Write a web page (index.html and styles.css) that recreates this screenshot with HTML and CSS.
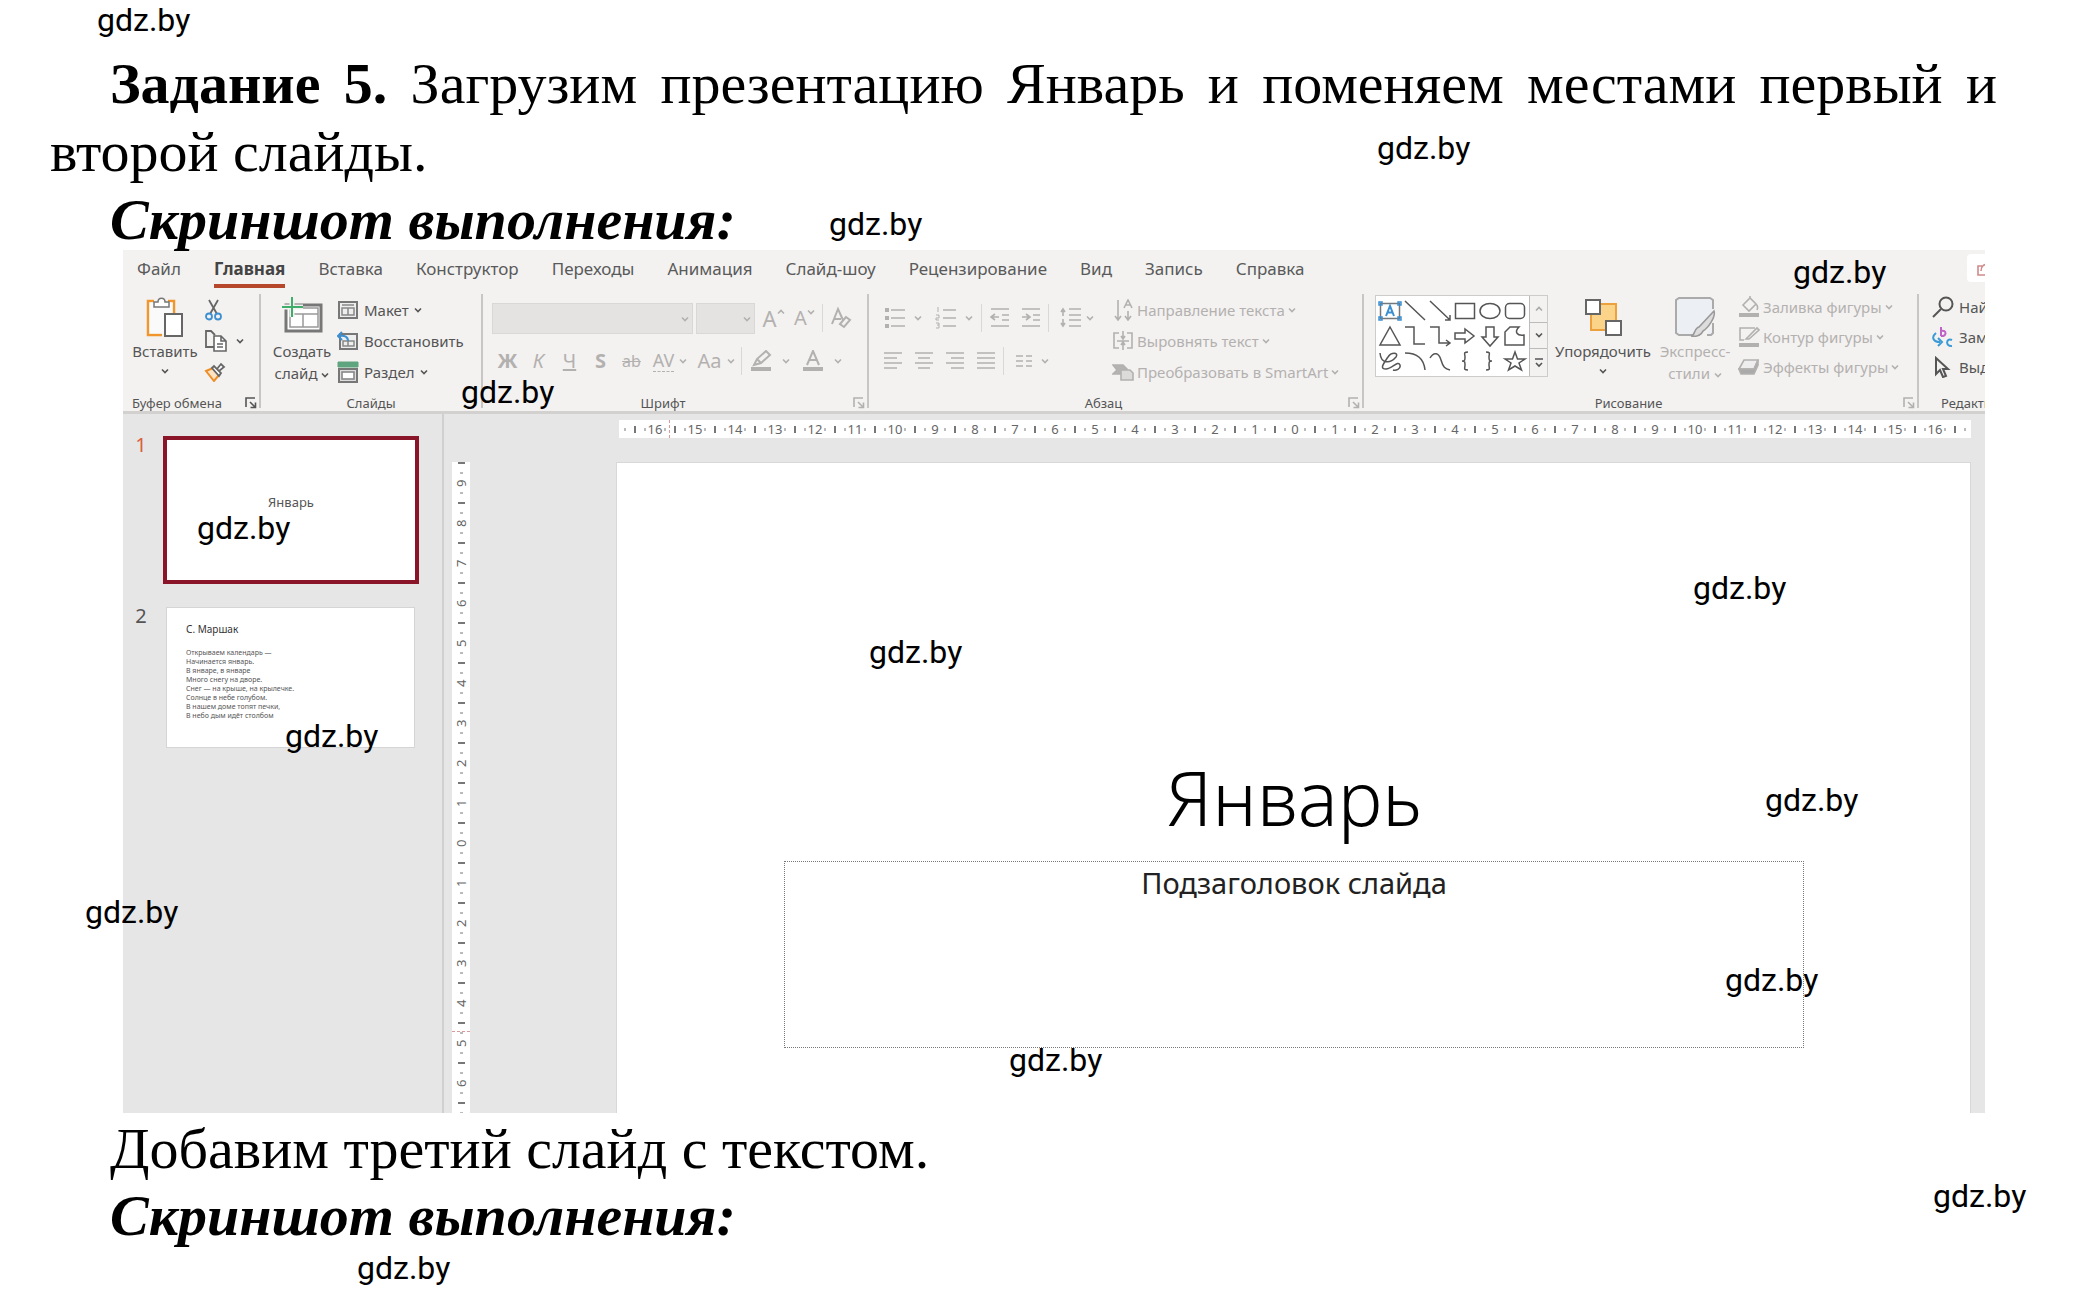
FILE: index.html
```html
<!DOCTYPE html>
<html lang="ru">
<head>
<meta charset="utf-8">
<title>Задание 5</title>
<link rel="stylesheet" href="styles.css">
</head>
<body>
<svg class="defs" aria-hidden="true">
  <symbol id="chev" viewBox="0 0 8 6"><path d="M1 1.5l3 3 3-3"/></symbol>
  <symbol id="chev-up" viewBox="0 0 8 6"><path d="M1 4.5l3-3 3 3"/></symbol>
  <symbol id="launch" viewBox="0 0 12 12"><path d="M1 10V1h9M5 5l5 5M10.500 5.500V10.500H5.500"/></symbol>
</svg>
<main class="page">
  <p class="task"><b>Задание 5.</b> Загрузим презентацию Январь и поменяем местами первый и второй слайды.</p>
  <p class="caption">Скриншот выполнения:</p>

  <section class="app">
    <header class="ribbon">
      <nav class="tabs">
        <a href="#">Файл</a>
        <a href="#" class="active">Главная</a>
        <a href="#">Вставка</a>
        <a href="#">Конструктор</a>
        <a href="#">Переходы</a>
        <a href="#">Анимация</a>
        <a href="#">Слайд-шоу</a>
        <a href="#">Рецензирование</a>
        <a href="#">Вид</a>
        <a href="#">Запись</a>
        <a href="#">Справка</a>
        <button class="share" aria-label="Поделиться"><svg width="16" height="16" viewBox="0 0 16 16"><path d="M5 6H1v9h13v-4M4 11c0-5 3-7 8-7M9 1l4 3-4 3"/></svg></button>
      </nav>
      <div class="groups">
        <section class="group g-clip">
          <div class="body">
            <button class="big">
              <svg width="40" height="42" viewBox="0 0 40 42"><path d="M9 5H3v34h14M23 5h6v12" stroke="#f0962d" stroke-width="2.500" fill="none"/><rect x="4.500" y="6.500" width="23" height="31" fill="#fafafa" stroke="none"/><path d="M9 11V6h4c0-5 7-5 7 0h4v5z" fill="#fff" stroke="#777" stroke-width="1.500"/><rect x="20" y="18" width="17" height="22" fill="#fff" stroke="#666" stroke-width="2"/></svg>
              <span>Вставить</span>
              <svg class="chev"><use href="#chev"/></svg>
            </button>
            <div class="stack">
              <button class="tool" aria-label="Вырезать"><svg width="20" height="22" viewBox="0 0 20 22"><path d="M5 1l8 14M14 1L6 15" stroke="#666" stroke-width="1.800" fill="none"/><circle cx="5" cy="17.500" r="3" fill="none" stroke="#3c8fd0" stroke-width="1.800"/><circle cx="14" cy="17.500" r="3" fill="none" stroke="#3c8fd0" stroke-width="1.800"/></svg></button>
              <button class="tool" aria-label="Копировать"><svg width="24" height="22" viewBox="0 0 24 22"><path d="M10 17H2V1h5l4 4" fill="none" stroke="#666" stroke-width="1.800"/><path d="M10 6h7l5 5v10H10zM17 6v5h5M13 14h6M13 17h6" fill="#fff" stroke="#666" stroke-width="1.600"/></svg><svg class="chev"><use href="#chev"/></svg></button>
              <button class="tool" aria-label="Формат по образцу"><svg width="22" height="20" viewBox="0 0 22 20"><path d="M2 9l7-3 6 7-5 6z" fill="#fde3c2" stroke="#ee8e28" stroke-width="2"/><path d="M8 6l2-2 7 7-2 3zM13 7l4-5 3 3-5 4" fill="#fff" stroke="#666" stroke-width="1.800"/></svg></button>
            </div>
          </div>
          <footer><h2>Буфер обмена</h2><button class="launch" aria-label="Буфер обмена: параметры"><svg><use href="#launch"/></svg></button></footer>
        </section>

        <section class="group g-slides">
          <div class="body">
            <button class="big">
              <svg width="42" height="42" viewBox="0 0 42 42"><rect x="5" y="9" width="35" height="26" fill="#fff" stroke="#777" stroke-width="3"/><path d="M9 12h28v19H9zM9 18h28M22 18v13" fill="none" stroke="#999" stroke-width="1.500"/><path d="M11 1v20M1 11h21" stroke="#f3f2f1" stroke-width="5"/><path d="M11 1v20M1 11h21" stroke="#3fae6a" stroke-width="2"/></svg>
              <span>Создать</span>
              <span>слайд <svg class="chev"><use href="#chev"/></svg></span>
            </button>
            <div class="stack">
              <button class="item"><svg width="22" height="20" viewBox="0 0 22 20"><rect x="2" y="2" width="18" height="16" fill="#eee" stroke="#777" stroke-width="2"/><path d="M5 5h12M5 8h12v7H5zM11 8v7" fill="none" stroke="#888" stroke-width="1.500"/></svg>Макет <svg class="chev"><use href="#chev"/></svg></button>
              <button class="item"><svg width="22" height="20" viewBox="0 0 22 20"><rect x="3" y="3" width="17" height="15" fill="#eee" stroke="#777" stroke-width="2"/><path d="M6 10h11v5H6zM11 10v5" fill="none" stroke="#888" stroke-width="1.500"/><path d="M2 5c6-1 9 1 9 5M5 1L1 5l4 4" fill="none" stroke="#3c8fd0" stroke-width="2"/></svg>Восстановить</button>
              <button class="item"><svg width="22" height="22" viewBox="0 0 22 22"><path d="M1 1h20v5H1z" fill="#5fa57f" stroke="#5fa57f" stroke-width="1"/><rect x="2" y="8" width="18" height="13" fill="#ddd" stroke="#777" stroke-width="2"/><rect x="5" y="11" width="12" height="7" fill="#fff" stroke="#888"/></svg>Раздел <svg class="chev"><use href="#chev"/></svg></button>
            </div>
          </div>
          <footer><h2>Слайды</h2></footer>
        </section>

        <section class="group g-font off">
          <div class="body rows">
            <div class="row first">
              <label class="combo font-name"><select aria-label="Шрифт" disabled></select><svg class="chev"><use href="#chev"/></svg></label>
              <label class="combo font-size"><select aria-label="Размер" disabled></select><svg class="chev"><use href="#chev"/></svg></label>
              <button class="glyph big-a" aria-label="Увеличить">A<svg class="chev up"><use href="#chev-up"/></svg></button>
              <button class="glyph" aria-label="Уменьшить">A<svg class="chev up"><use href="#chev"/></svg></button>
              <i class="bar"></i>
              <button class="glyph" aria-label="Очистить формат"><svg width="22" height="24" viewBox="0 0 22 24"><path d="M2 18L8 3l5 11M4 13h7M10 18l6-7 4 3-6 7z" stroke-width="2"/></svg></button>
            </div>
            <div class="row">
              <button class="glyph"><b>Ж</b></button>
              <button class="glyph"><em>К</em></button>
              <button class="glyph"><u>Ч</u></button>
              <button class="glyph shadow"><b>S</b></button>
              <button class="glyph small"><s>ab</s></button>
              <button class="glyph pair av"><span>AV</span><svg class="chev"><use href="#chev"/></svg></button>
              <button class="glyph pair">Aa<svg class="chev"><use href="#chev"/></svg></button>
              <i class="bar"></i>
              <button class="glyph pair wide" aria-label="Цвет выделения"><svg width="22" height="22" viewBox="0 0 22 22"><path d="M4 15l3-6 9-8 4 4-9 8zM7 9l4 4" stroke-width="2"/><path d="M1 19h20" stroke-width="4"/></svg><svg class="chev"><use href="#chev"/></svg></button>
              <button class="glyph pair wide" aria-label="Цвет текста"><svg width="22" height="22" viewBox="0 0 22 22"><path d="M5 15l6-14 6 14M7 10h8" stroke-width="2"/><path d="M1 19h20" stroke-width="4"/></svg><svg class="chev"><use href="#chev"/></svg></button>
            </div>
          </div>
          <footer><h2>Шрифт</h2><button class="launch" aria-label="Шрифт: параметры"><svg><use href="#launch"/></svg></button></footer>
        </section>

        <section class="group g-para off">
          <div class="body">
            <div class="rows">
              <div class="row first">
                <button class="glyph pair" aria-label="Маркеры"><svg width="22" height="22" viewBox="0 0 22 22"><path d="M7 3h14M7 11h14M7 19h14"/><path d="M1 3h4M1 11h4M1 19h4" stroke-width="4"/></svg><svg class="chev"><use href="#chev"/></svg></button>
                <button class="glyph pair" aria-label="Нумерация"><svg width="22" height="22" viewBox="0 0 22 22"><path d="M8 3h13M8 11h13M8 19h13"/><path d="M3 0v5M1 8h3v3H1v2h3M1 16h3v5H1M2 18h2" stroke-width="1"/></svg><svg class="chev"><use href="#chev"/></svg></button>
                <i class="bar"></i>
                <button class="glyph" aria-label="Уменьшить отступ"><svg width="20" height="22" viewBox="0 0 20 22"><path d="M1 2h18M12 8h7M12 13h7M1 19h18M1 10h8M5 7l-4 3 4 3"/></svg></button>
                <button class="glyph" aria-label="Увеличить отступ"><svg width="20" height="22" viewBox="0 0 20 22"><path d="M1 2h18M12 8h7M12 13h7M1 19h18M1 10h8M5 7l4 3-4 3"/></svg></button>
                <i class="bar"></i>
                <button class="glyph pair spacing" aria-label="Интервал"><svg width="22" height="22" viewBox="0 0 22 22"><path d="M9 2h12M9 8h12M9 13h12M9 19h12M3 2v7M3 12v7M1 5l2-3 2 3M1 16l2 3 2-3"/></svg><svg class="chev"><use href="#chev"/></svg></button>
              </div>
              <div class="row">
                <button class="glyph" aria-label="По левому краю"><svg width="20" height="20" viewBox="0 0 20 20"><path d="M1 2h18M1 7h13M1 12h18M1 17h13"/></svg></button>
                <button class="glyph" aria-label="По центру"><svg width="20" height="20" viewBox="0 0 20 20"><path d="M1 2h18M4 7h12M1 12h18M4 17h12"/></svg></button>
                <button class="glyph" aria-label="По правому краю"><svg width="20" height="20" viewBox="0 0 20 20"><path d="M1 2h18M6 7h13M1 12h18M6 17h13"/></svg></button>
                <button class="glyph" aria-label="По ширине"><svg width="20" height="20" viewBox="0 0 20 20"><path d="M1 2h18M1 7h18M1 12h18M1 17h18"/></svg></button>
                <i class="bar"></i>
                <button class="glyph pair" aria-label="Колонки"><svg width="18" height="14" viewBox="0 0 18 14"><path d="M1 2h7M1 7h7M1 12h7M11 2h6M11 7h6M11 12h6"/></svg><svg class="chev"><use href="#chev"/></svg></button>
              </div>
            </div>
            <div class="stack">
              <button class="item"><svg width="22" height="22" viewBox="0 0 22 22"><path d="M6 1v19M3 17l3 4 3-4M16 12v8M13 17l3 4 3-4M12 9l4-8 4 8M13 6h5"/></svg>Направление текста <svg class="chev"><use href="#chev"/></svg></button>
              <button class="item"><svg width="22" height="20" viewBox="0 0 22 20"><path d="M7 2H2v15h5M15 2h5v15h-5M11 0v7M11 12v7M5 10h12M9 5l2 3 2-3M9 14l2-3 2 3"/></svg>Выровнять текст <svg class="chev"><use href="#chev"/></svg></button>
              <button class="item"><svg width="22" height="18" viewBox="0 0 22 18"><path d="M1 2h10l4 4-4 5H1l4-4z" fill="#b5b3b1"/><path d="M9 7h9l3 3v7H9z" fill="#dcdbda"/></svg>Преобразовать в SmartArt <svg class="chev"><use href="#chev"/></svg></button>
            </div>
          </div>
          <footer><h2>Абзац</h2><button class="launch" aria-label="Абзац: параметры"><svg><use href="#launch"/></svg></button></footer>
        </section>

        <section class="group g-draw">
          <div class="body">
            <div class="gallery">
              <svg class="shapes" width="153" height="78" viewBox="0 0 153 78">
                <rect x="4.500" y="7.500" width="19" height="15" stroke="#777"/><path d="M10 20l4-10 4 10M11.500 16.500h5" stroke="#3c8fd0" stroke-width="2"/>
                <path d="M3 6h3v3H3zM22 6h3v3h-3zM3 21h3v3H3zM22 21h3v3h-3z" stroke="#3c8fd0"/>
                <path d="M29 5l20 19M54 5l20 19M69 24h5v-5M79.500 7.500h19v15h-19z"/>
                <ellipse cx="114" cy="15" rx="10" ry="7.500"/><rect x="129.500" y="7.500" width="19" height="15" rx="4"/>
                <path d="M14 31l10 18H4zM29 31h9v17h11M54 31h9v16h10M70 44l4 3-4 3M79 37h10v-4l9 7-9 7v-4H79zM110 31h8v10h4l-8 9-8-9h4zM129 49V36l5-5h9c-5 5-2 9 5 8v10z"/>
                <path d="M4 57c1 11 10 11 16 4 3-5-5-5-8 0-4 6-9 12-2 12 6 0 12-9 14-4 1 4-4 6-7 5M29 57c13 0 19 7 20 17M54 62c4-7 9-5 11 2s4 9 9 10M92 56c-5 0-3 2-3 5s0 4-3 4c3 0 3 1 3 4s-2 5 3 5M110 56c5 0 3 2 3 5s0 4 3 4c-3 0-3 1-3 4s2 5-3 5M139 56l2.500 7h7.500l-6 4 2.500 7-6.500-4-6.500 4 2.500-7-6-4h7.500z"/>
              </svg>
              <div class="scroll">
                <button class="dim" aria-label="Вверх"><svg class="chev"><use href="#chev-up"/></svg></button>
                <button aria-label="Вниз"><svg class="chev"><use href="#chev"/></svg></button>
                <button aria-label="Ещё"><svg width="10" height="10" viewBox="0 0 10 10"><path d="M1 1h8M2 5l3 3 3-3"/></svg></button>
              </div>
            </div>
            <button class="big arrange">
              <svg width="40" height="42" viewBox="0 0 40 42"><rect x="8" y="8" width="25" height="26" fill="#fbd48a" stroke="#eda13c" stroke-width="2"/><rect x="3" y="4" width="14" height="14" fill="#fff" stroke="#666" stroke-width="2"/><rect x="23" y="25" width="15" height="14" fill="#fff" stroke="#666" stroke-width="2"/></svg>
              <span>Упорядочить</span>
              <svg class="chev"><use href="#chev"/></svg>
            </button>
            <button class="big styles off">
              <svg width="42" height="42" viewBox="0 0 42 42"><path d="M26 39H5l-3-2V4l3-2h31l3 2v9M39 27v10l-2 2h-4" fill="#eceff3" stroke="#aaa" stroke-width="2"/><path d="M17 40c4 0 3-8 8-9L40 15c2 6-6 17-11 20-2 5-8 6-12 5z" fill="#ddd" stroke="#999" stroke-width="1.500"/></svg>
              <span>Экспресс-</span>
              <span>стили <svg class="chev"><use href="#chev"/></svg></span>
            </button>
            <div class="stack off">
              <button class="item"><svg width="22" height="22" viewBox="0 0 22 22"><path d="M5 9l7-7 6 6-7 7zM12 2V0M18 8c2 2 2 4 1 6"/><path d="M1 19h20" stroke-width="4"/></svg>Заливка фигуры <svg class="chev"><use href="#chev"/></svg></button>
              <button class="item"><svg width="22" height="22" viewBox="0 0 22 22"><path d="M17 2H2v12h4M8 13L19 2l2 2L11 13z"/><path d="M1 19h20" stroke-width="4"/></svg>Контур фигуры <svg class="chev"><use href="#chev"/></svg></button>
              <button class="item"><svg width="22" height="18" viewBox="0 0 22 18"><path d="M1 11L6 2h14l-4 9z" fill="#eee"/><path d="M1 11h15l4-9v5l-4 9H3z" fill="#aaa"/></svg>Эффекты фигуры <svg class="chev"><use href="#chev"/></svg></button>
            </div>
          </div>
          <footer class="off-launch"><h2>Рисование</h2><button class="launch" aria-label="Рисование: параметры"><svg><use href="#launch"/></svg></button></footer>
        </section>

        <section class="group g-edit">
          <div class="body">
            <div class="stack">
              <button class="item"><svg width="22" height="22" viewBox="0 0 22 22"><path d="M1 21l8-8" stroke-width="2"/><circle cx="14" cy="8" r="6.500" stroke-width="2"/></svg>Найти</button>
              <button class="item"><svg width="22" height="22" viewBox="0 0 22 22"><path d="M9 1v9M9 5c6-2 6 6 0 5" stroke="#c063c6" stroke-width="2"/><path d="M4 7c-5 4-3 9 4 9M6 12l4 4-4 4M20 14c-6-3-7 7 0 6" stroke="#3c9bd6" stroke-width="2"/></svg>Заменить</button>
              <button class="item"><svg width="22" height="22" viewBox="0 0 22 22"><path d="M4 2v16l4-4 3 7 3-1-3-7h5z" stroke-width="2"/></svg>Выделить</button>
            </div>
          </div>
          <footer><h2>Редактирование</h2></footer>
        </section>
      </div>
    </header>

    <div class="workspace">
      <ol class="thumbs">
        <li><span class="num current">1</span><div class="thumb selected">Январь</div></li>
        <li><span class="num">2</span><div class="thumb poem">
          <h3>С. Маршак</h3>
          <p>Открываем календарь —</p><p>Начинается январь.</p><p>В январе, в январе</p><p>Много снегу на дворе.</p><p>Снег — на крыше, на крылечке.</p><p>Солнце в небе голубом.</p><p>В нашем доме топят печки,</p><p>В небо дым идёт столбом</p>
        </div></li>
      </ol>
      <div class="vruler"><span>9</span><span>8</span><span>7</span><span>6</span><span>5</span><span>4</span><span>3</span><span>2</span><span>1</span><span>0</span><span>1</span><span>2</span><span>3</span><span>4</span><span>5</span><span>6</span><i class="mark"></i></div>
      <div class="stage">
        <div class="hruler"><span>16</span><span>15</span><span>14</span><span>13</span><span>12</span><span>11</span><span>10</span><span>9</span><span>8</span><span>7</span><span>6</span><span>5</span><span>4</span><span>3</span><span>2</span><span>1</span><span>0</span><span>1</span><span>2</span><span>3</span><span>4</span><span>5</span><span>6</span><span>7</span><span>8</span><span>9</span><span>10</span><span>11</span><span>12</span><span>13</span><span>14</span><span>15</span><span>16</span><i class="mark"></i></div>
        <article class="slide">
          <h1>Январь</h1>
          <div class="subtitle">Подзаголовок слайда</div>
        </article>
      </div>
    </div>
  </section>

  <p class="after">Добавим третий слайд с текстом.</p>
  <p class="caption">Скриншот выполнения:</p>

  <span class="wm w1">gdz.by</span>
  <span class="wm w2">gdz.by</span>
  <span class="wm w3">gdz.by</span>
  <span class="wm w4">gdz.by</span>
  <span class="wm w5">gdz.by</span>
  <span class="wm w6">gdz.by</span>
  <span class="wm w7">gdz.by</span>
  <span class="wm w8">gdz.by</span>
  <span class="wm w9">gdz.by</span>
  <span class="wm w10">gdz.by</span>
  <span class="wm w11">gdz.by</span>
  <span class="wm w12">gdz.by</span>
  <span class="wm w13">gdz.by</span>
  <span class="wm w14">gdz.by</span>
  <span class="wm w15">gdz.by</span>
</main>
</body>
</html>
```
FILE: styles.css
```css
* { box-sizing: border-box; }
body { margin: 0; background: #fff; color: #000; }
h1, h2, h3, p, ol { margin: 0; padding: 0; font-weight: normal; }
button { border: 0; padding: 0; background: none; color: inherit; font: inherit; }
svg { flex: none; fill: none; stroke: currentColor; stroke-width: 1.6; }
.defs { position: absolute; width: 0; height: 0; }

/* Document text */
.page {
  position: relative;
  min-height: 1310px;
  padding: 50px 87px 0 50px;
  font-family: "Liberation Serif", "Times New Roman", serif;
  font-size: 58px;
  line-height: 67px;
}
.task { text-align: justify; text-indent: 60px; line-height: 68px; }
.caption { text-indent: 60px; font-weight: bold; font-style: italic; }
.after { text-indent: 60px; padding-top: 2px; }

/* Application window */
.app {
  margin: -3px 12px 0 73px;
  overflow: hidden;
  background: #e6e6e6;
  color: #555;
  font-family: "Noto Sans", "Open Sans", sans-serif;
  font-size: 15px;
  line-height: 22px;
}
.ribbon { background: #f3f2f1; border-bottom: 3px solid #d2d1d0; height: 164px; }
.tabs { display: flex; align-items: center; gap: 33px; height: 44px; padding-left: 14px; font-size: 17px; }
.tabs a { color: #5a5a5a; text-decoration: none; line-height: 22px; height: 30px; margin-top: 2px; }
.tabs .active { font-weight: bold; color: #444; border-bottom: 4px solid #b7472a; }
.share { width: 30px; height: 28px; padding-left: 10px; background: #fff; border-radius: 4px; color: #d08a8a; margin: -8px -12px 0 auto; display: flex; align-items: center; }
.groups { display: grid; grid-template-columns: 138px 222px 386px 495px 555px 1fr; }
.group { display: flex; flex-direction: column; height: 114px; border-right: 2px solid #c8c6c4; min-width: 0; }
.body { display: flex; flex: none; height: 100px; }
.group footer { display: flex; flex: none; align-items: center; position: relative; height: 18px; line-height: 18px; }
.group h2 { flex: 1; font-size: 13px; padding-right: 24px; text-align: center; white-space: nowrap; }
.launch { position: absolute; right: 2px; top: 3px; width: 12px; height: 12px; display: flex; }
.launch svg { width: 12px; height: 12px; }
.chev { width: 8px; height: 6px; vertical-align: middle; }
.big { display: flex; flex-direction: column; align-items: center; white-space: nowrap; }
.big > svg:first-child { margin: 2px 0; }
.big .chev { margin-top: 6px; }
.big span .chev { margin-top: 0; }
.stack { display: flex; flex-direction: column; }
.stack > button { height: 31px; display: flex; align-items: center; gap: 5px; white-space: nowrap; }
.off, .off-launch .launch { color: #b3b1af; }
.off h2 { color: #555; }

.g-clip .big { margin-left: 8px; width: 68px; }
.g-clip .stack { margin-left: 5px; }
.g-clip .tool { gap: 8px; }
.g-clip h2 { text-align: left; padding: 0 0 0 9px; }
.g-slides .big { margin-left: 11px; width: 60px; }
.g-slides .stack { margin-left: 5px; }
.g-slides h2 { padding: 0; }

.rows { display: flex; flex-direction: column; }
.row { display: flex; align-items: center; height: 37px; flex: none; }
.row.first { height: 48px; }
.glyph { width: 31px; height: 30px; display: flex; align-items: center; justify-content: center; font-size: 20px; }
.glyph.small { font-size: 16px; }
.big-a { font-size: 22px; }
.glyph .up { margin-bottom: 12px; }
.glyph.pair { width: 51px; gap: 8px; }
.bar { width: 1px; height: 28px; background: #dad8d6; margin: 0 2px; }
.g-font .body { padding-left: 9px; }
.combo { position: relative; display: flex; height: 31px; }
.combo select { flex: 1; appearance: none; border: 1px solid #d0cecd; border-radius: 0; background: #dfdedd; }
.combo .chev { position: absolute; right: 4px; top: 13px; }
.font-name { width: 201px; margin-right: 3px; }
.font-size { width: 59px; margin-right: 3px; }
.g-font .glyph.pair { gap: 5px; width: 46px; }
.av span { border-bottom: 1px dashed; line-height: 22px; font-size: 18px; }
.g-font .glyph.wide { gap: 10px; width: 52px; }
.g-para .rows { padding-left: 8px; width: 243px; }
.g-para .glyph.spacing { gap: 4px; }
.g-para .stack > button, .g-draw .stack > button { gap: 3px; }
.g-draw .body { padding-left: 11px; }

.gallery { display: flex; width: 173px; height: 82px; margin-top: 1px; background: #fff; border: 1px solid #ccc; }
.shapes { stroke: #555; stroke-width: 1.5; }
.scroll { flex: 1; display: grid; grid-template-rows: 1fr 1fr 1fr; border-left: 1px solid #bbb; }
.scroll button { display: flex; align-items: center; justify-content: center; background: #f3f2f1; border-bottom: 1px solid #bbb; }
.scroll button:last-child { border-bottom: 0; }
.scroll .dim { color: #aaa; }
.arrange { width: 110px; }
.styles { width: 74px; margin-right: 6px; }
.g-draw .stack > button, .g-edit .stack > button { height: 30px; }
.g-draw .stack, .g-edit .stack { margin-top: -2px; }
.g-edit { border: 0; }
.g-edit .stack { padding-left: 13px; }
.g-edit h2 { text-align: left; padding: 0 0 0 22px; }

/* Editing area */
.workspace { display: flex; height: 699px; overflow: hidden; }
.thumbs { list-style: none; width: 321px; border-right: 2px solid #d0d0d0; padding-top: 22px; }
.thumbs li { display: flex; height: 171px; }
.num { width: 40px; padding-right: 4px; font-size: 20px; line-height: 18px; text-align: center; }
.current { color: #d9603b; }
.thumb { width: 249px; height: 141px; margin-left: 3px; background: #fff; border: 1px solid #d5d5d5; }
.thumb.selected { width: 256px; height: 148px; margin-left: 0; border: 4px solid #8a1528; text-align: center; font-size: 13px; line-height: 124px; }
.poem { padding: 14px 19px; font-size: 7px; line-height: 9px; }
.poem h3 { font-size: 10px; line-height: 14px; padding-bottom: 12px; color: #333; }
.hruler, .vruler { position: relative; display: flex; background-color: #fff; color: #666; font-size: 13px; line-height: 18px; }
.vruler {
  flex-direction: column; flex: none; width: 18px; margin: 48px 0 0 8px; padding-top: 1px;
  background-image: linear-gradient(transparent 19px, #777 19px 21px, transparent 21px), linear-gradient(transparent 9px, #bbb 9px 11px, transparent 11px);
  background-size: 7px 40px, 3px 20px;
  background-position: 50% -19px, 50% 1px;
  background-repeat: repeat-y;
}
.vruler span { height: 40px; flex: none; writing-mode: vertical-rl; transform: rotate(180deg); text-align: center; }
.stage { flex: 1; padding: 6px 14px 0 146px; display: flex; flex-direction: column; }
.hruler {
  justify-content: center; height: 18px; margin: 0 0 24px 3px; overflow: hidden;
  background-image: linear-gradient(90deg, transparent 19px, #777 19px 21px, transparent 21px), linear-gradient(90deg, transparent 9px, #bbb 9px 11px, transparent 11px);
  background-size: 40px 7px, 20px 3px;
  background-position: calc(50% + 20px) 50%, calc(50% + 10px) 50%;
  background-repeat: repeat-x;
}
.hruler span { width: 40px; flex: none; text-align: center; }
.mark { position: absolute; }
.hruler .mark { left: 50px; top: 0; height: 18px; border-left: 1px dashed #d99; }
.vruler .mark { left: 0; top: 569px; width: 18px; border-top: 1px dashed #d99; }
.slide { flex: 1; background: #fff; border: 1px solid #d8d8d8; border-bottom: 0; padding: 284px 166px 0 167px; color: #000; text-align: center; }
.slide h1 { font-size: 75px; line-height: 100px; font-weight: 300; }
.subtitle { height: 187px; margin-top: 14px; padding-top: 3px; border: 1px dotted #777; font-size: 29px; line-height: 36px; color: #222; }

/* Watermarks scattered over the sheet */
.wm { position: absolute; font: 32px/40px Roboto, sans-serif; }
.w1 { left: 97px; top: 0; }
.w2 { left: 1377px; top: 128px; }
.w3 { left: 829px; top: 204px; }
.w4 { left: 1793px; top: 252px; }
.w5 { left: 461px; top: 372px; }
.w6 { left: 197px; top: 508px; }
.w7 { left: 1693px; top: 568px; }
.w8 { left: 869px; top: 632px; }
.w9 { left: 285px; top: 716px; }
.w10 { left: 1765px; top: 780px; }
.w11 { left: 85px; top: 892px; }
.w12 { left: 1725px; top: 960px; }
.w13 { left: 1009px; top: 1040px; }
.w14 { left: 1933px; top: 1176px; }
.w15 { left: 357px; top: 1248px; }
```
